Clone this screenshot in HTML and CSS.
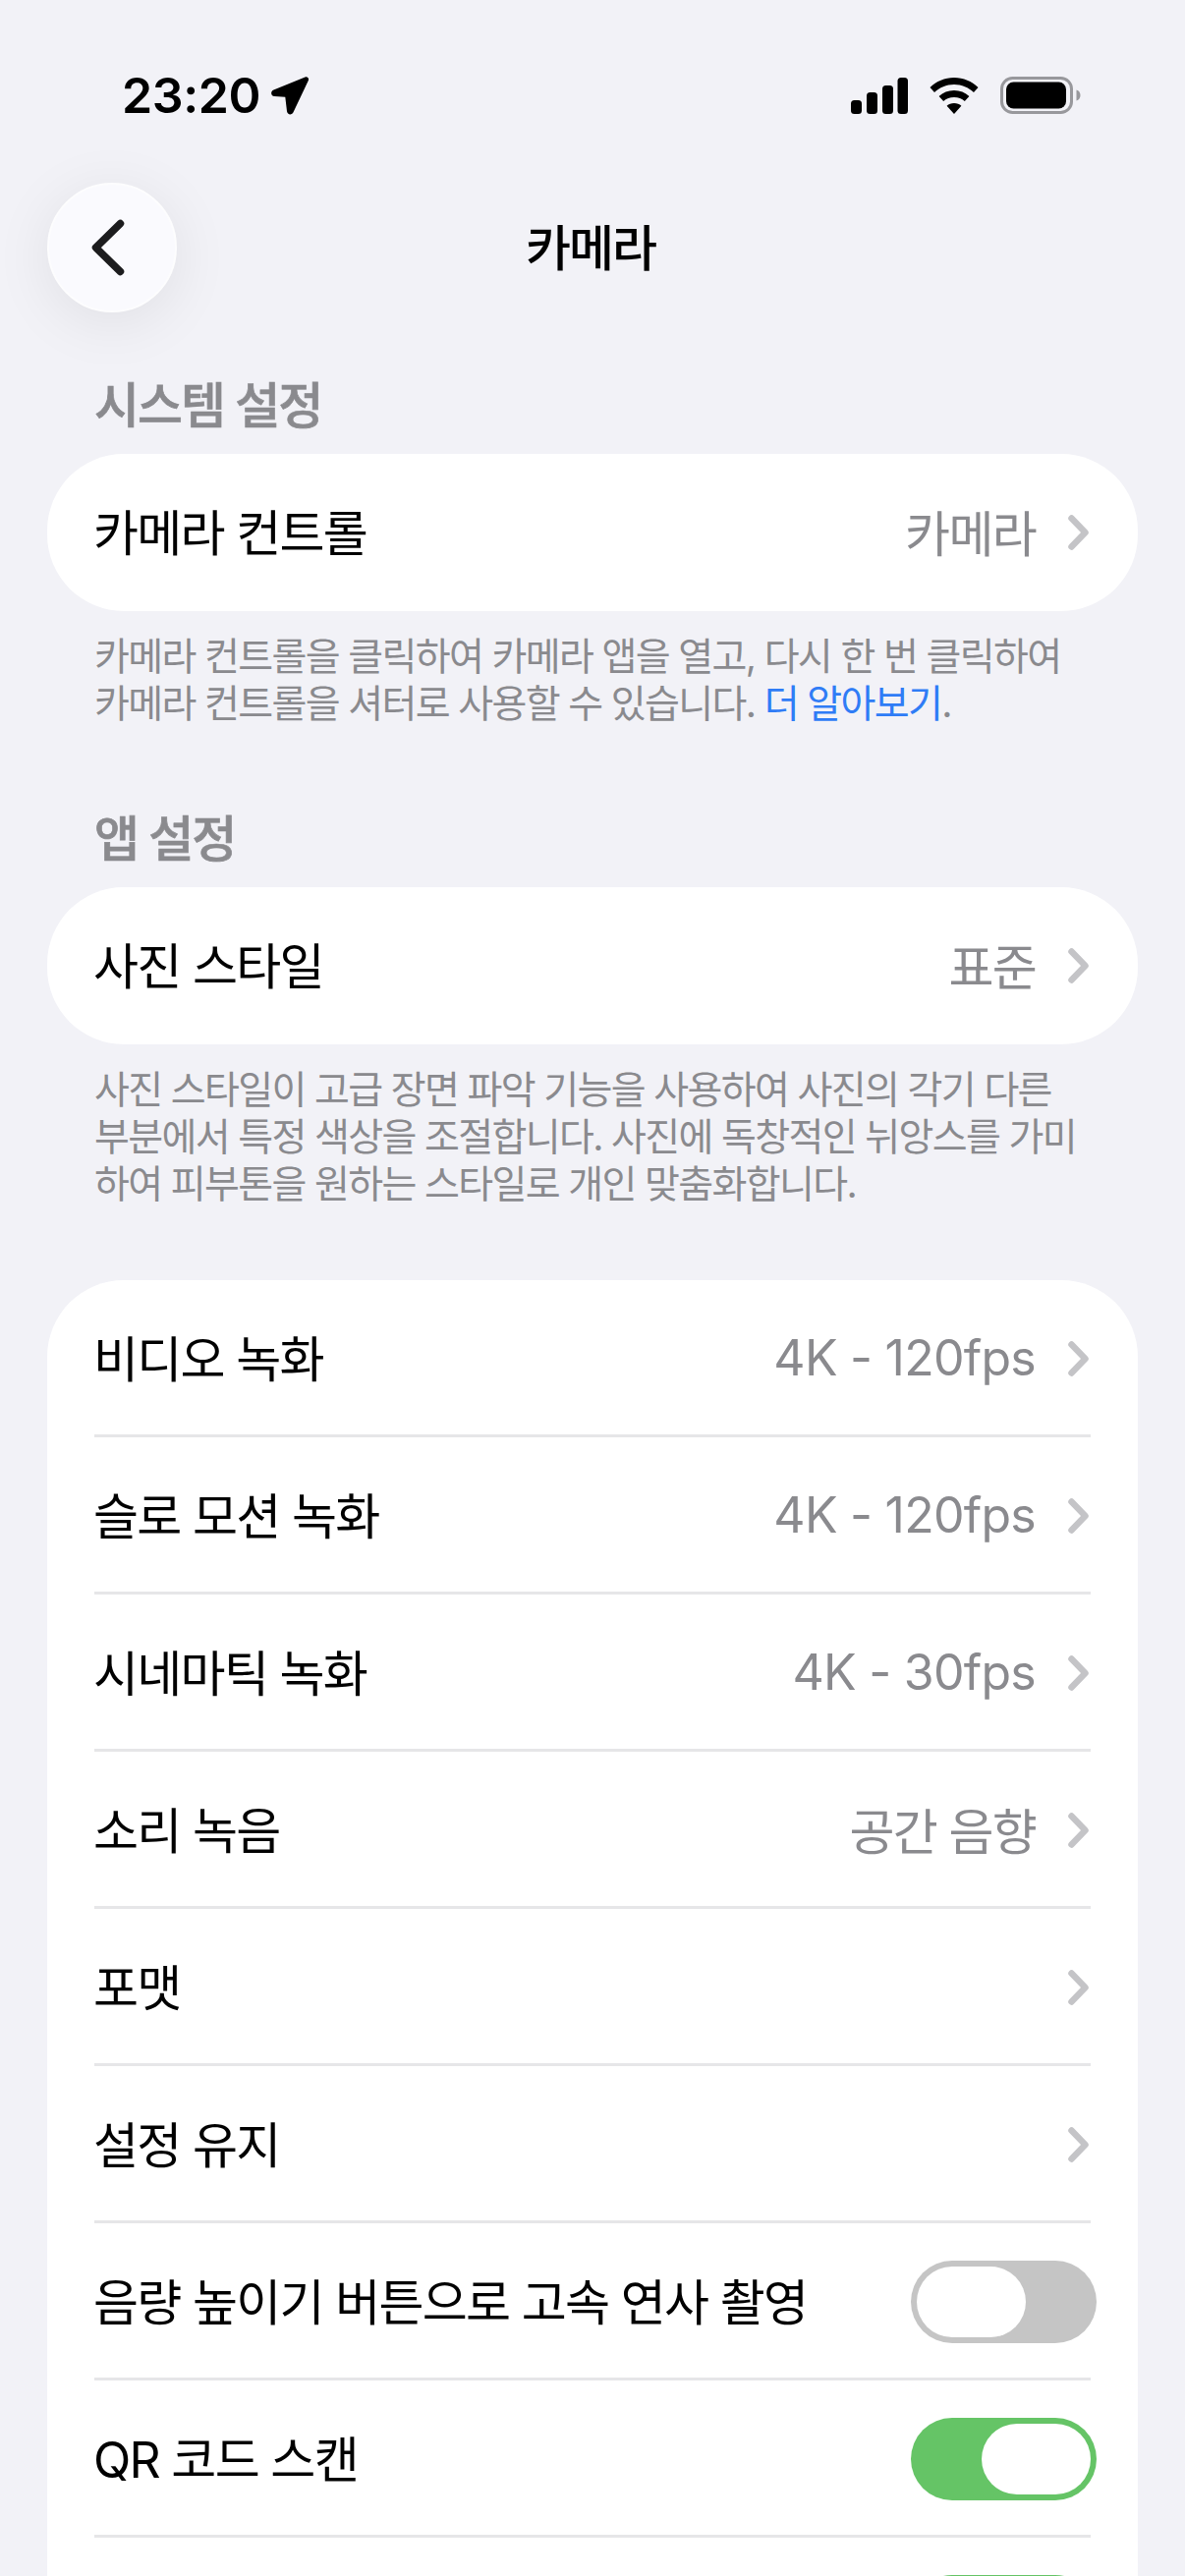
FILE: index.html
```html
<!DOCTYPE html>
<html lang="ko">
<head>
    <meta charset="UTF-8">
    <title>카메라</title>
    <link rel="stylesheet" href="styles.css">
</head>
<body>
    <div class="screen">
        <div class="status-bar">
            <div class="status-left">
                <span class="time">23:20</span>
                <svg class="loc" width="40" height="40" viewBox="0 0 40 40"><path d="M35.500 1.500 3.500 14.500c-3.500 1.400-3 6.300.8 6.600l11 .6 1.700 14.600c.4 3.600 5 4.200 6.500 1L38.800 5c1-2.300-1-4.400-3.300-3.500z"/></svg>
            </div>
            <div class="status-right">
                <svg width="58" height="37" viewBox="0 0 58 37"><rect x="0" y="23" width="11" height="14" rx="3.500"/><rect x="16" y="15" width="11" height="22" rx="3.500"/><rect x="32" y="8" width="11" height="29" rx="3.500"/><rect x="47.500" y="0" width="10.500" height="37" rx="3.500"/></svg>
                <svg width="50" height="37" viewBox="0 0 50 37"><path d="M25 0C15.500 0 7 3.800 0.500 10l4.500 5C10.200 10.200 17.200 7 25 7s14.800 3.200 20 8l4.500-5C43 3.800 34.500 0 25 0z"/><path d="M25 13c-6 0-11.300 2.300-15.400 6l4.600 5c2.800-2.500 6.600-4 10.800-4s8 1.500 10.800 4l4.600-5C36.300 15.300 31 13 25 13z"/><path d="M25 26c-3 0-5.500 1-7.400 2.800L25 37l7.400-8.200C30.500 27 28 26 25 26z"/></svg>
                <svg width="82" height="38" viewBox="0 0 82 38"><rect x="1.500" y="1.500" width="71" height="35" rx="11" fill="none" stroke="#98989c" stroke-width="3"/><rect x="6" y="5.500" width="61" height="27" rx="7.500"/><path d="M77.500 13.500c2.600.8 4 3 4 5.500s-1.400 4.700-4 5.500z" fill="#98989c"/></svg>
            </div>
        </div>

        <div class="nav-bar">
            <button class="back-btn">
                <svg width="40" height="60" viewBox="0 0 40 60"><path d="M32.500 5.500 7.500 30l25 24.500" fill="none" stroke="#1c1c1e" stroke-width="7.500" stroke-linecap="round" stroke-linejoin="round"/></svg>
            </button>
            <h1>카메라</h1>
        </div>

        <div class="section-title first">시스템 설정</div>
        <div class="card">
            <div class="row">
                <span class="label">카메라 컨트롤</span>
                <span class="value han">카메라</span>
                <svg class="chev" width="21" height="36" viewBox="0 0 21 36"><path d="M3.500 3.500 17.500 18 3.500 32.500"/></svg>
            </div>
        </div>
        <p class="note">카메라 컨트롤을 클릭하여 카메라 앱을 열고, 다시 한 번 클릭하여<br>카메라 컨트롤을 셔터로 사용할 수 있습니다. <a href="#">더 알아보기</a>.</p>

        <div class="section-title">앱 설정</div>
        <div class="card">
            <div class="row">
                <span class="label">사진 스타일</span>
                <span class="value han">표준</span>
                <svg class="chev" width="21" height="36" viewBox="0 0 21 36"><path d="M3.500 3.500 17.500 18 3.500 32.500"/></svg>
            </div>
        </div>
        <p class="note">사진 스타일이 고급 장면 파악 기능을 사용하여 사진의 각기 다른<br>부분에서 특정 색상을 조절합니다. 사진에 독창적인 뉘앙스를 가미<br>하여 피부톤을 원하는 스타일로 개인 맞춤화합니다.</p>

        <div class="card list">
            <div class="row">
                <span class="label">비디오 녹화</span>
                <span class="value">4K - 120fps</span>
                <svg class="chev" width="21" height="36" viewBox="0 0 21 36"><path d="M3.500 3.500 17.500 18 3.500 32.500"/></svg>
            </div>
            <div class="row">
                <span class="label">슬로 모션 녹화</span>
                <span class="value">4K - 120fps</span>
                <svg class="chev" width="21" height="36" viewBox="0 0 21 36"><path d="M3.500 3.500 17.500 18 3.500 32.500"/></svg>
            </div>
            <div class="row">
                <span class="label">시네마틱 녹화</span>
                <span class="value">4K - 30fps</span>
                <svg class="chev" width="21" height="36" viewBox="0 0 21 36"><path d="M3.500 3.500 17.500 18 3.500 32.500"/></svg>
            </div>
            <div class="row">
                <span class="label">소리 녹음</span>
                <span class="value han">공간 음향</span>
                <svg class="chev" width="21" height="36" viewBox="0 0 21 36"><path d="M3.500 3.500 17.500 18 3.500 32.500"/></svg>
            </div>
            <div class="row">
                <span class="label">포맷</span>
                <svg class="chev" width="21" height="36" viewBox="0 0 21 36"><path d="M3.500 3.500 17.500 18 3.500 32.500"/></svg>
            </div>
            <div class="row">
                <span class="label">설정 유지</span>
                <svg class="chev" width="21" height="36" viewBox="0 0 21 36"><path d="M3.500 3.500 17.500 18 3.500 32.500"/></svg>
            </div>
            <div class="row">
                <span class="label">음량 높이기 버튼으로 고속 연사 촬영</span>
                <span class="toggle"><span class="knob"></span></span>
            </div>
            <div class="row">
                <span class="label">QR 코드 스캔</span>
                <span class="toggle on"><span class="knob"></span></span>
            </div>
            <div class="row">
                <span class="label"></span>
                <span class="toggle on"><span class="knob"></span></span>
            </div>
        </div>
    </div>
</body>
</html>
```

FILE: styles.css
```css
html, body {
    margin: 0;
    padding: 0;
}

body {
    background-color: #f2f2f7;
    font-family: Inter, "Noto Sans CJK KR", sans-serif;
    color: #000;
}

.screen {
    width: 1206px;
    height: 2622px;
    overflow: hidden;
    display: flex;
    flex-direction: column;
}

.status-bar {
    display: flex;
    justify-content: space-between;
    align-items: center;
    height: 38px;
    margin-top: 78px;
    padding: 0 106px 0 124px;
    flex: none;
}

.status-left {
    display: flex;
    align-items: center;
    gap: 10px;
}

.time {
    font-size: 50px;
    font-weight: 600;
    line-height: 38px;
    letter-spacing: -0.4px;
}

.status-right {
    display: flex;
    align-items: center;
    gap: 22px;
}

.nav-bar {
    display: flex;
    align-items: center;
    justify-content: center;
    position: relative;
    height: 126px;
    padding-bottom: 6px;
    margin-top: 70px;
    flex: none;
}

.nav-bar h1 {
    margin: 0 4px 0 0;
    font-size: 50px;
    font-weight: 500;
    letter-spacing: -2px;
}

.back-btn {
    position: absolute;
    left: 48px;
    top: 0;
    width: 132px;
    height: 132px;
    padding: 0 9px 0 0;
    border: 2px solid #fdfdfe;
    border-radius: 50%;
    background-color: #fafafe;
    box-shadow: 0 10px 60px rgba(0,0,0,0.08);
    display: flex;
    align-items: center;
    justify-content: center;
}

.section-title {
    margin: 84px 0 19px 96px;
    font-size: 50px;
    line-height: 60px;
    font-weight: 500;
    color: #8a8a8e;
    -webkit-text-stroke: 0.7px #8a8a8e;
    letter-spacing: -2px;
    flex: none;
}

.section-title.first {
    margin-top: 65px;
}

.card {
    margin: 0 48px;
    background: #fff;
    border-radius: 78px;
    flex: none;
}

.card.list {
    margin-top: 74px;
}

.row {
    height: 160px;
    margin-left: 48px;
    padding-right: 50px;
    display: flex;
    align-items: center;
    box-sizing: border-box;
    position: relative;
}

.row + .row::before {
    content: "";
    position: absolute;
    top: -3px;
    left: 0;
    right: 48px;
    height: 3px;
    background: #e6e6e8;
}

.label {
    font-size: 50px;
    letter-spacing: -1.700px;
    flex: 1;
    margin-left: -1px;
    padding-bottom: 6px;
}

.value {
    font-size: 50px;
    letter-spacing: -0.75px;
    color: #8a8a8e;
    margin-right: 33px;
    padding-bottom: 2px;
}

.value.han {
    letter-spacing: -1.700px;
    padding-bottom: 4px;
}

.chev {
    flex: none;
}

.chev path {
    fill: none;
    stroke: #c4c4c7;
    stroke-width: 6.500;
    stroke-linecap: round;
    stroke-linejoin: round;
}

.note {
    margin: 22px 96px 0;
    font-size: 39px;
    line-height: 48px;
    color: #8a8a8e;
    letter-spacing: -1.650px;
    flex: none;
}

.note a {
    color: #2f7cf6;
    text-decoration: none;
}

.toggle {
    width: 189px;
    height: 84px;
    margin-right: -8px;
    border-radius: 42px;
    background: #c5c5c5;
    box-sizing: border-box;
    padding: 6px;
    display: flex;
    justify-content: flex-start;
}

.toggle.on {
    background: #65c466;
    justify-content: flex-end;
}

.knob {
    width: 111px;
    height: 72px;
    border-radius: 36px;
    background: #fff;
}
```
